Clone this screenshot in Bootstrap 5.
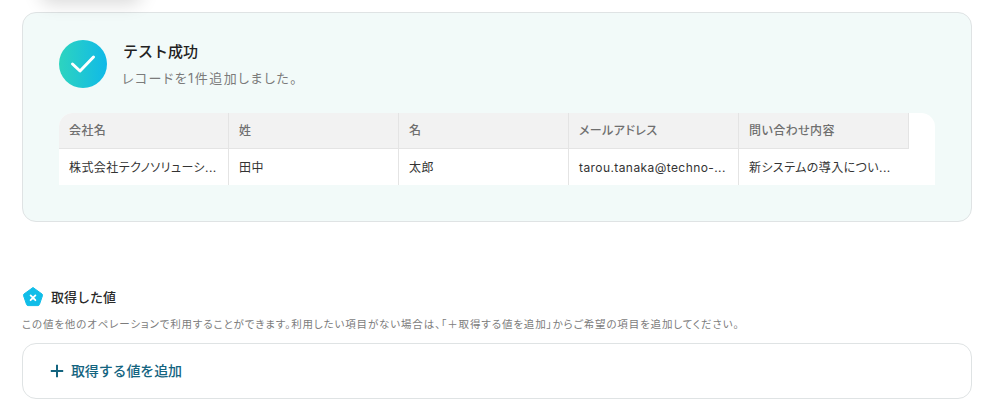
<!DOCTYPE html>
<html lang="ja"><head><meta charset="utf-8"><title>テスト成功</title>
<link href="https://cdn.jsdelivr.net/npm/bootstrap@5.3.0/dist/css/bootstrap.min.css" rel="stylesheet">
<style>
html,body{height:418px;overflow:hidden;background:#fff}
body{font-family:Inter,"Noto Sans CJK JP",sans-serif;color:#2b2b2b}
.page-wrap{padding:0 25px 0 22px;overflow:hidden;height:418px;position:relative}
.menu-shadow{position:absolute;left:40px;top:-30px;width:102px;height:28px;border-radius:12px;box-shadow:0 6px 18px rgba(0,0,0,.15);background:#fff}
.result-panel{margin-top:12px;height:210px;background:#f2faf9;border:1px solid #dfe3e4;border-radius:14px;padding:27px 36px 0}
.check-circle{width:48px;height:48px;border-radius:50%;background:linear-gradient(90deg,#2dd4bf,#10b9e8);flex:none}
.result-title{font-size:15px;font-weight:500;line-height:22px;color:#222;padding-top:1px}
.result-sub{font-size:13px;line-height:20px;color:#7b7b7b;margin-top:5px;font-feature-settings:"palt";letter-spacing:.11em;margin-left:-1px}
.result-head{gap:16px;height:48px;margin-bottom:25px}
.data-wrap{background:#fff;border-radius:14px 14px 0 0;height:72px;overflow:hidden}
.data-row{display:grid;grid-template-columns:repeat(5,170px)}
.hcell,.dcell{padding:0 10px;font-size:12px;border-right:1px solid #e4e4e4;white-space:nowrap;overflow:hidden;font-feature-settings:"palt";letter-spacing:.035em}
.hcell:last-child,.dcell:last-child{border-right:0}
.hcell{height:36px;line-height:35px;background:#f2f2f2;color:#6f6f6f;font-weight:500;border-bottom:1px solid #e4e4e4}
.dcell{height:36px;line-height:37px;color:#333}
.values-head{margin-top:64px;gap:7px;height:22px}
.values-title{font-size:13px;font-weight:500;color:#2a2a2a;line-height:20px}
.values-note{font-size:10.5px;line-height:16px;color:#7c7c7c;margin-top:9px;white-space:nowrap;font-feature-settings:"palt";letter-spacing:.081em}
.add-box{margin-top:10px;height:56px;border:1px solid #dfe3e4;border-radius:14px;padding-left:27px;gap:7px;color:#14647f;font-size:14px;font-weight:500}
.add-label{padding-bottom:2px;letter-spacing:-.01em}
</style></head>
<body>
<div class="page-wrap">
  <div class="menu-shadow"></div>
  <div style="height:12px;margin-top:-12px"></div>
  <div class="result-panel">
    <div class="d-flex align-items-start result-head">
      <div class="check-circle d-flex align-items-center justify-content-center">
        <svg width="26" height="20" viewBox="0 0 26 20" fill="none"><path d="M2.5 10 L10 17 L23.5 3" stroke="#fff" stroke-width="3" stroke-linecap="round" stroke-linejoin="round"/></svg>
      </div>
      <div>
        <div class="result-title">テスト成功</div>
        <div class="result-sub">レコードを1件追加しました。</div>
      </div>
    </div>
    <div class="data-wrap">
      <div class="data-row">
        <div class="hcell">会社名</div><div class="hcell">姓</div><div class="hcell">名</div><div class="hcell">メールアドレス</div><div class="hcell">問い合わせ内容</div>
        <div class="dcell">株式会社テクノソリューシ...</div><div class="dcell">田中</div><div class="dcell">太郎</div><div class="dcell">tarou.tanaka@techno-...</div><div class="dcell">新システムの導入につい...</div>
      </div>
    </div>
  </div>
  <div class="d-flex align-items-center values-head">
    <svg width="22" height="22" viewBox="0 0 22 22"><path d="M11 1.5 L20 8 Q20.8 8.6 20.5 9.6 L17.4 18.6 Q17 19.6 16 19.6 L6 19.6 Q5 19.6 4.6 18.6 L1.5 9.6 Q1.2 8.6 2 8 Z" fill="#10bde8" stroke="#10bde8" stroke-linejoin="round"/><path d="M8.6 9.4 L13.4 14.2 M13.4 9.4 L8.6 14.2" stroke="#fff" stroke-width="1.8" stroke-linecap="round"/></svg>
    <div class="values-title">取得した値</div>
  </div>
  <div class="values-note">この値を他のオペレーションで利用することができます。利用したい項目がない場合は、「＋取得する値を追加」からご希望の項目を追加してください。</div>
  <div class="add-box d-flex align-items-center">
    <svg width="14" height="14" viewBox="0 0 14 14"><path d="M7 .8V13.2M.8 7H13.2" stroke="#14647f" stroke-width="2"/></svg>
    <span class="add-label">取得する値を追加</span>
  </div>
</div>
<script src="https://cdn.jsdelivr.net/npm/bootstrap@5.3.0/dist/js/bootstrap.bundle.min.js"></script>
</body></html>
